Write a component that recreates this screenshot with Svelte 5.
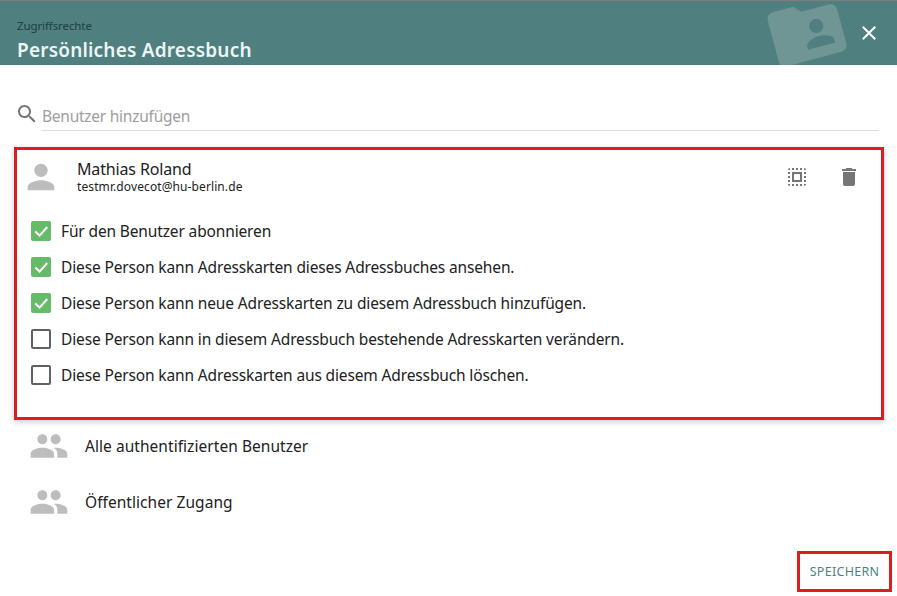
<script>
	const rights = [
		{ label: 'Für den Benutzer abonnieren', checked: true },
		{ label: 'Diese Person kann Adresskarten dieses Adressbuches ansehen.', checked: true },
		{ label: 'Diese Person kann neue Adresskarten zu diesem Adressbuch hinzufügen.', checked: true },
		{ label: 'Diese Person kann in diesem Adressbuch bestehende Adresskarten verändern.', checked: false },
		{ label: 'Diese Person kann Adresskarten aus diesem Adressbuch löschen.', checked: false }
	];
	const groups = ['Alle authentifizierten Benutzer', 'Öffentlicher Zugang'];

	const peoplePath = 'M16 11c1.66 0 2.99-1.34 2.99-3S17.66 5 16 5c-1.66 0-3 1.34-3 3s1.34 3 3 3zm-8 0c1.66 0 2.99-1.34 2.99-3S9.66 5 8 5C6.34 5 5 6.34 5 8s1.34 3 3 3zm0 2c-2.33 0-7 1.17-7 3.5V19h14v-2.5c0-2.33-4.67-3.5-7-3.5zm8 0c-.29 0-.62.02-.97.05 1.16.84 1.97 1.97 1.97 3.45V19h6v-2.5c0-2.33-4.67-3.5-7-3.5z';
</script>

<div class="dialog">
	<header class="toolbar">
		<svg class="watermark" viewBox="0 0 24 24" aria-hidden="true">
			<path d="M20 6h-8l-2-2H4c-1.1 0-1.99.9-1.99 2L2 18c0 1.1.9 2 2 2h16c1.1 0 2-.9 2-2V8c0-1.1-.9-2-2-2zm-5 3c1.1 0 2 .9 2 2s-.9 2-2 2-2-.9-2-2 .9-2 2-2zm4 8h-8v-1c0-1.33 2.67-2 4-2s4 .67 4 2v1z" />
		</svg>
		<div class="titles">
			<div class="subtitle">Zugriffsrechte</div>
			<div class="title">Persönliches Adressbuch</div>
		</div>
		<svg class="close" viewBox="0 0 24 24" aria-hidden="true">
			<path d="M19 6.41L17.59 5 12 10.59 6.41 5 5 6.41 10.59 12 5 17.59 6.41 19 12 13.41 17.59 19 19 17.59 13.41 12z" />
		</svg>
	</header>

	<div class="content">
		<div class="search">
			<svg class="search-icon" viewBox="0 0 24 24" aria-hidden="true">
				<path d="M15.5 14h-.79l-.28-.27C15.41 12.59 16 11.11 16 9.5 16 5.91 13.09 3 9.5 3S3 5.91 3 9.5 5.91 16 9.5 16c1.61 0 3.09-.59 4.23-1.57l.27.28v.79l5 4.99L20.49 19l-4.99-5zm-6 0C7.01 14 5 11.99 5 9.5S7.01 5 9.5 5 14 7.01 14 9.5 11.99 14 9.5 14z" />
			</svg>
			<div class="search-field">Benutzer hinzufügen</div>
		</div>

		<section class="card">
			<div class="user">
				<svg class="avatar" viewBox="0 0 24 24" aria-hidden="true">
					<path d="M12 12c2.21 0 4-1.79 4-4s-1.79-4-4-4-4 1.79-4 4 1.79 4 4 4zm0 2c-2.67 0-8 1.34-8 4v2h16v-2c0-2.66-5.33-4-8-4z" />
				</svg>
				<div class="user-text">
					<div class="user-name">Mathias Roland</div>
					<div class="user-mail">testmr.dovecot@hu-berlin.de</div>
				</div>
				<div class="actions">
					<svg class="action" viewBox="0 0 24 24" aria-hidden="true">
						<path d="M3 5h2V3c-1.1 0-2 .9-2 2zm0 8h2v-2H3v2zm4 8h2v-2H7v2zM3 9h2V7H3v2zm10-6h-2v2h2V3zm6 0v2h2c0-1.1-.9-2-2-2zM5 21v-2H3c0 1.1.9 2 2 2zm-2-4h2v-2H3v2zM9 3H7v2h2V3zm2 18h2v-2h-2v2zm8-8h2v-2h-2v2zm0 8c1.1 0 2-.9 2-2h-2v2zm0-12h2V7h-2v2zm0 8h2v-2h-2v2zm-4 4h2v-2h-2v2zm0-16h2V3h-2v2zM7 17h10V7H7v10zm2-8h6v6H9V9z" />
					</svg>
					<svg class="action" viewBox="0 0 24 24" aria-hidden="true">
						<path d="M6 19c0 1.1.9 2 2 2h8c1.1 0 2-.9 2-2V7H6v12zM19 4h-3.5l-1-1h-5l-1 1H5v2h14V4z" />
					</svg>
				</div>
			</div>

			<ul class="rights">
				{#each rights as right}
					<li class="right">
						<span class="box" class:checked={right.checked}>
							{#if right.checked}
								<svg viewBox="0 0 20 20" aria-hidden="true">
									<path d="M4.3 10.6l4.3 4 7.6-8.6" />
								</svg>
							{/if}
						</span>
						{right.label}
					</li>
				{/each}
			</ul>
		</section>

		<ul class="groups">
			{#each groups as group}
				<li class="group">
					<svg class="group-icon" viewBox="0 0 24 24" aria-hidden="true">
						<path d={peoplePath} />
					</svg>
					{group}
				</li>
			{/each}
		</ul>
	</div>

	<footer class="footer">
		<div class="save">SPEICHERN</div>
	</footer>
</div>

<style>
	:global(body) {
		margin: 0;
		background: #fff;
	}

	.dialog {
		width: 897px;
		height: 596px;
		display: flex;
		flex-direction: column;
		overflow: hidden;
		font-family: 'Noto Sans', 'Open Sans', sans-serif;
		color: #212121;
	}

	.toolbar {
		position: relative;
		height: 64px;
		flex: none;
		display: flex;
		align-items: flex-start;
		justify-content: space-between;
		overflow: hidden;
		background: #4f7f7f;
		border-top: 1px solid #7d7d7d;
		color: #eef4f4;
	}

	.watermark {
		position: absolute;
		left: 765px;
		top: -11px;
		width: 84px;
		height: 84px;
		fill: #6f9695;
		transform: rotate(-15deg);
	}

	.titles {
		position: relative;
		padding: 17px 0 0 17px;
	}

	.subtitle {
		font-size: 11.5px;
		line-height: 16px;
		letter-spacing: -0.1px;
		color: #21403f;
	}

	.title {
		margin-top: 4px;
		font-size: 19px;
		line-height: 24px;
		font-weight: 600;
		letter-spacing: 0.2px;
	}

	.close {
		position: relative;
		width: 24px;
		height: 24px;
		margin: 20px 16px 0 0;
		fill: #fff;
	}

	.content {
		flex: 1;
		display: flex;
		flex-direction: column;
		padding: 0 13px 0 14px;
	}

	.search {
		display: flex;
		align-items: flex-end;
		gap: 3px;
		height: 66px;
		padding: 0 5px 0 1px;
		flex: none;
		box-sizing: border-box;
	}

	.search-icon {
		width: 24px;
		height: 24px;
		fill: #757575;
		margin-bottom: 5px;
	}

	.search-field {
		flex: 1;
		height: 28px;
		line-height: 28px;
		font-size: 15.5px;
		letter-spacing: -0.25px;
		color: #9e9e9e;
		border-bottom: 1px solid #dedede;
	}

	.card {
		box-sizing: border-box;
		height: 273px;
		margin-top: 16px;
		border: 3px solid #dc1c1f;
		box-shadow: 0 2px 6px rgba(0, 0, 0, 0.2);
		padding: 0 14px;
	}

	.user {
		display: flex;
		align-items: center;
		height: 53px;
	}

	.avatar {
		width: 40px;
		height: 40px;
		fill: #bdbdbd;
		margin-left: -10px;
	}

	.user-text {
		flex: 1;
		margin-left: 16px;
	}

	.user-name {
		font-size: 16px;
		line-height: 20px;
		letter-spacing: -0.15px;
	}

	.user-mail {
		font-size: 12px;
		line-height: 16px;
		letter-spacing: 0.1px;
	}

	.actions {
		display: flex;
		gap: 28px;
		margin-right: 6px;
	}

	.action {
		width: 24px;
		height: 24px;
		fill: #757575;
	}

	.rights,
	.groups {
		list-style: none;
		margin: 0;
		padding: 0;
	}

	.rights {
		margin-top: 10px;
	}

	.right {
		display: flex;
		align-items: center;
		gap: 10px;
		height: 36px;
		font-size: 15.5px;
		letter-spacing: -0.14px;
	}

	.box {
		box-sizing: border-box;
		width: 20px;
		height: 20px;
		border: 2px solid #616161;
		border-radius: 2px;
		flex: none;
	}

	.box.checked {
		border: 0;
		background: #66bb6a;
	}

	.box svg {
		display: block;
		width: 20px;
		height: 20px;
		fill: none;
		stroke: #fff;
		stroke-width: 2;
	}

	.groups {
		margin-top: -2px;
	}

	.group {
		display: flex;
		align-items: center;
		height: 56px;
		font-size: 15.5px;
		letter-spacing: 0.05px;
		padding-left: 15px;
	}

	.group-icon {
		width: 40px;
		height: 40px;
		fill: #bdbdbd;
		margin-right: 16px;
	}

	.footer {
		display: flex;
		justify-content: flex-end;
		padding: 0 5px 4px 0;
		flex: none;
	}

	.save {
		box-sizing: border-box;
		width: 95px;
		height: 41px;
		line-height: 35px;
		text-align: center;
		border: 3px solid #dc1c1f;
		font-size: 12.5px;
		color: #4f7f7f;
		letter-spacing: 0.3px;
	}
</style>
